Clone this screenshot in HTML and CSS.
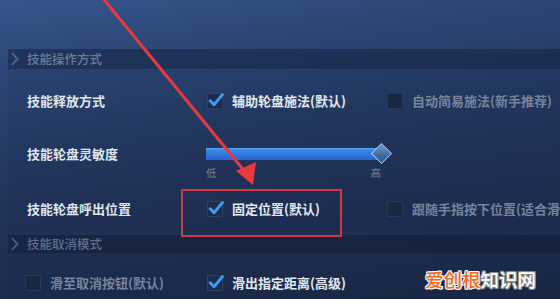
FILE: index.html
```html
<!DOCTYPE html>
<html lang="zh-CN">
<head>
<meta charset="utf-8">
<link rel="stylesheet" href="styles.css">
</head>
<body>
<div class="screen">
  <div class="top-space"></div>
  <div class="section-head">
    <svg class="chev" width="10" height="14" viewBox="0 0 10 14"><polyline points="1,1 6,7 1,13" fill="none" stroke="#56698a" stroke-width="1.6"/><polyline points="4,3 8,7 4,11" fill="none" stroke="#3b4e70" stroke-width="1"/></svg>
    <span>技能操作方式</span>
  </div>
  <div class="panel">
    <div class="row r1">
      <div class="label">技能释放方式</div>
      <div class="opt on"><span class="cb checked"><svg width="17" height="17" viewBox="0 0 16 16"><path d="M3 8.2 L6.6 12 L14.5 2.5" fill="none" stroke="#3c9cf2" stroke-width="2.8" stroke-linecap="round" stroke-linejoin="round"/></svg></span>辅助轮盘施法(默认)</div>
      <div class="opt off"><span class="cb"></span>自动简易施法(新手推荐)</div>
    </div>
    <div class="row r2">
      <div class="label">技能轮盘灵敏度</div>
      <div class="slider">
        <div class="track"><span class="thumb"></span></div>
        <div class="scale"><span>低</span><span>高</span></div>
      </div>
    </div>
    <div class="row r3">
      <div class="label">技能轮盘呼出位置</div>
      <div class="opt on"><span class="cb checked"><svg width="17" height="17" viewBox="0 0 16 16"><path d="M3 8.2 L6.6 12 L14.5 2.5" fill="none" stroke="#3c9cf2" stroke-width="2.8" stroke-linecap="round" stroke-linejoin="round"/></svg></span>固定位置(默认)</div>
      <div class="opt off clip"><span class="cb"></span><span class="cliptext">跟随手指按下位置(适合滑动施法)</span></div>
    </div>
  </div>
  <div class="section-head second">
    <svg class="chev" width="10" height="14" viewBox="0 0 10 14"><polyline points="1,1 6,7 1,13" fill="none" stroke="#4d5f80" stroke-width="1.6"/><polyline points="4,3 8,7 4,11" fill="none" stroke="#33456a" stroke-width="1"/></svg>
    <span>技能取消模式</span>
  </div>
  <div class="panel">
    <div class="row r4">
      <div class="opt off first"><span class="cb"></span>滑至取消按钮(默认)</div>
      <div class="opt on"><span class="cb checked"><svg width="17" height="17" viewBox="0 0 16 16"><path d="M3 8.2 L6.6 12 L14.5 2.5" fill="none" stroke="#3c9cf2" stroke-width="2.8" stroke-linecap="round" stroke-linejoin="round"/></svg></span>滑出指定距离(高级)</div>
    </div>
  </div>

  <div class="redbox"></div>
  <svg class="arrow" width="560" height="299" viewBox="0 0 560 299">
    <line x1="101" y1="-4" x2="246" y2="173" stroke="#e8393c" stroke-width="3"/>
    <polygon points="253,185 236,171 256,162" fill="#e8393c"/>
  </svg>
  <div class="watermark"><span class="wm-o">爱创根</span><span class="wm-w">知识网</span></div>
</div>
</body>
</html>
```

FILE: styles.css
```css
html, body {
  margin: 0;
  padding: 0;
}
body {
  width: 560px;
  height: 299px;
  overflow: hidden;
  font-family: "Noto Sans CJK SC", "Noto Sans", sans-serif;
}
.screen {
  position: relative;
  width: 560px;
  height: 299px;
  overflow: hidden;
  background: linear-gradient(172deg, #36568c 0%, #2c4776 18%, #243b64 40%, #1f3155 62%, #1a2847 100%);
}
.top-space {
  height: 49px;
}
.section-head {
  height: 20px;
  margin-left: 8px;
  display: flex;
  align-items: center;
  gap: 6px;
  padding-left: 3px;
  background: rgba(12, 22, 46, 0.38);
  color: #6c7b97;
  font-size: 12.5px;
  font-weight: 500;
  line-height: 16px;
}
.section-head.second {
  height: 18px;
  margin-top: 4px;
  color: #5f6e8a;
}
.chev {
  flex: none;
}
.panel {
  margin-left: 8px;
  background: rgba(10, 20, 44, 0.06);
}
.row {
  display: flex;
  align-items: center;
  padding-left: 19px;
  font-size: 13px;
  line-height: 16px;
}
.r1 { height: 64px; }
.r2 {
  height: 54px;
  align-items: flex-start;
}
.r3 { height: 44px; }
.r4 {
  height: 60px;
  padding-left: 17px;
}
.label {
  width: 180px;
  flex: none;
  color: #dfe5ee;
  font-weight: 700;
}
.r2 .label {
  margin-top: 13px;
}
.opt {
  width: 180px;
  flex: none;
  display: flex;
  align-items: center;
  gap: 9px;
  font-weight: 700;
  white-space: nowrap;
}
.opt.first {
  width: 182px;
}
.opt.on {
  color: #e3e8f0;
}
.opt.off {
  color: #76839d;
  width: auto;
}
.opt.off.first {
  width: 182px;
}
.opt.clip {
  flex: 1 1 auto;
  min-width: 0;
  overflow: hidden;
}
.cliptext {
  overflow: hidden;
  white-space: nowrap;
}
.cb {
  width: 16px;
  height: 16px;
  flex: none;
  box-sizing: border-box;
  background: #1a2642;
  border: 1px solid #283858;
  border-radius: 1px;
  position: relative;
}
.cb.checked {
  background: #1d2c4e;
  border-color: #2e4268;
}
.cb svg {
  position: absolute;
  left: -1px;
  top: -2px;
}
.slider {
  width: 186px;
  flex: none;
  margin-top: 15px;
  margin-left: -1px;
}
.track {
  position: relative;
  width: 172px;
  height: 12px;
  box-sizing: border-box;
  background: linear-gradient(180deg, #3f8ef0 0%, #2f74dc 60%, #2a66c8 100%);
  border-top: 1px solid #5aa0f2;
}
.thumb {
  position: absolute;
  right: -11px;
  top: -3px;
  width: 15px;
  height: 15px;
  box-sizing: border-box;
  transform: rotate(45deg);
  background: linear-gradient(135deg, #6f9cd2 0%, #3f6aa6 60%, #34598f 100%);
  border: 1px solid #a9c8ec;
}
.scale {
  display: flex;
  justify-content: space-between;
  width: 175px;
  margin-top: 7px;
  font-size: 10.5px;
  line-height: 12px;
  color: #6f7f9b;
}
.redbox {
  position: absolute;
  left: 181px;
  top: 189px;
  width: 161px;
  height: 48px;
  box-sizing: border-box;
  border: 2px solid #d2383e;
}
.arrow {
  position: absolute;
  left: 0;
  top: 0;
}
.watermark {
  position: absolute;
  left: 425px;
  top: 266px;
  font-size: 18.5px;
  line-height: 26px;
  font-weight: 500;
  letter-spacing: 0;
}
.wm-o {
  color: #ea6d22;
  text-shadow: 1px 0 0 #f4f4f4, -1px 0 0 #f4f4f4, 0 1px 0 #f4f4f4, 0 -1px 0 #f4f4f4, 1px 1px 0 #f4f4f4, -1px -1px 0 #f4f4f4, 1px -1px 0 #f4f4f4, -1px 1px 0 #f4f4f4;
}
.wm-w {
  color: #ffffff;
  text-shadow: 1px 0 0 #8a8a8a, -1px 0 0 #8a8a8a, 0 1px 0 #8a8a8a, 0 -1px 0 #8a8a8a, 1px 1px 0 #8a8a8a, -1px -1px 0 #8a8a8a, 1px -1px 0 #8a8a8a, -1px 1px 0 #8a8a8a;
}
```
